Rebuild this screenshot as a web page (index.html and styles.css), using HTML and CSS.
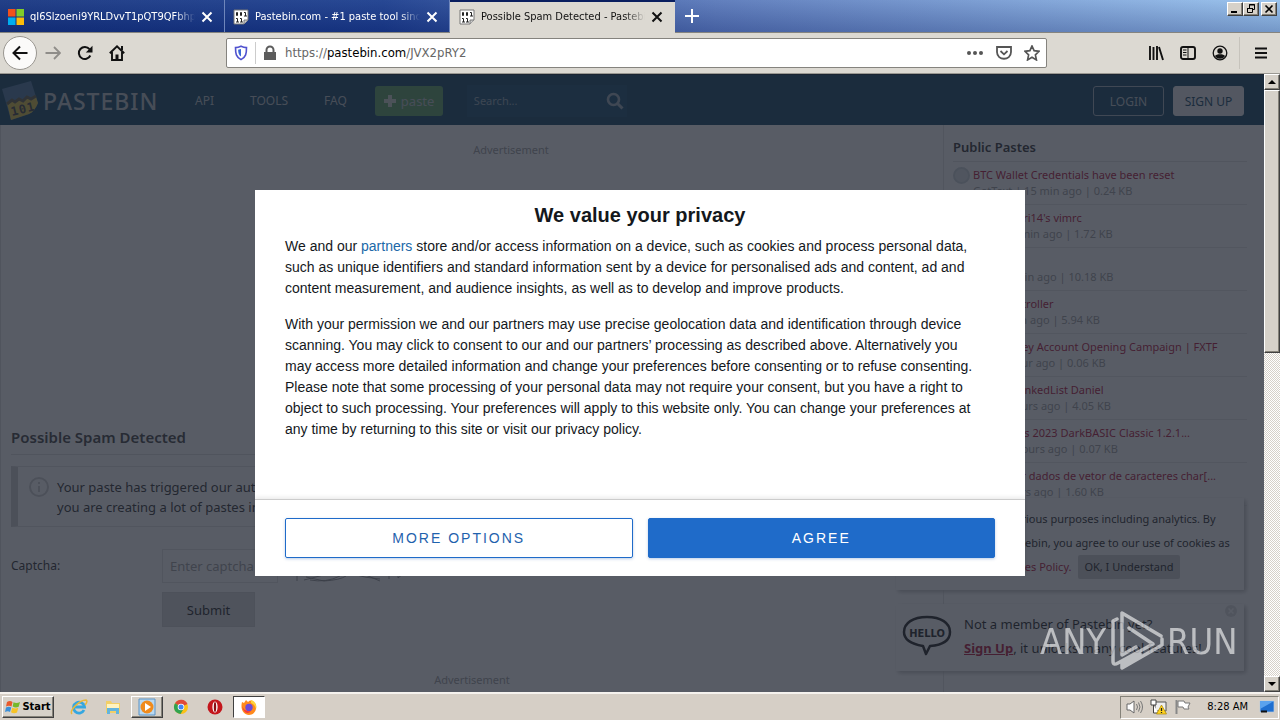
FILE: index.html
```html
<!DOCTYPE html>
<html lang="en">
<head>
<meta charset="utf-8">
<title>Possible Spam Detected - Pastebin.com</title>
<link rel="stylesheet" href="styles.css">
</head>
<body>
<svg class="defs" aria-hidden="true">
  <symbol id="close" viewBox="0 0 12 12"><path d="M1.500 1.500l9 9M10.500 1.500l-9 9" fill="none" stroke="currentColor" stroke-width="2"/></symbol>
  <symbol id="bits" viewBox="0 0 16 16">
    <path d="M1 1h14v10l-4 4H1z" fill="#fff" stroke="#777" stroke-width="1"/>
    <path d="M11 15v-4h4" fill="#ccc" stroke="#777" stroke-width="1"/>
    <path d="M3.500 3.500h1v3h-1zM7.500 3.500h1v3h-1zM11 3.500h1.500V7M11 7h3M3 9.500h1.500V13M3 13h3M7 9.500h1.500V13M7 13h3" fill="none" stroke="#222" stroke-width="1"/>
  </symbol>
</svg>

<header class="tabbar">
  <div class="tab">
    <svg class="fav" viewBox="0 0 16 16"><path fill="#f1511b" d="M0 0h7.500v7.500H0z"/><path fill="#80cc28" d="M8.500 0H16v7.500H8.500z"/><path fill="#00adef" d="M0 8.500h7.500V16H0z"/><path fill="#fbbc09" d="M8.500 8.500H16V16H8.500z"/></svg>
    <span class="tab-title">qI6Slzoeni9YRLDvvT1pQT9QFbhp</span>
    <button class="tab-close" aria-label="Close tab"><svg width="12" height="12"><use href="#close"/></svg></button>
  </div>
  <div class="tab">
    <svg class="fav"><use href="#bits"/></svg>
    <span class="tab-title">Pastebin.com - #1 paste tool since</span>
    <button class="tab-close" aria-label="Close tab"><svg width="12" height="12"><use href="#close"/></svg></button>
  </div>
  <div class="tab active">
    <svg class="fav"><use href="#bits"/></svg>
    <span class="tab-title">Possible Spam Detected - Pastebin</span>
    <button class="tab-close" aria-label="Close tab"><svg width="12" height="12"><use href="#close"/></svg></button>
  </div>
  <button class="new-tab" aria-label="New tab"><svg width="16" height="16" viewBox="0 0 16 16"><path d="M8 1v14M1 8h14" stroke="#fff" stroke-width="2"/></svg></button>
  <div class="window-buttons">
    <button aria-label="Minimize"><svg width="12" height="10" viewBox="0 0 12 10"><path d="M2 8h6" stroke="#000" stroke-width="2"/></svg></button>
    <button aria-label="Restore"><svg width="12" height="10" viewBox="0 0 12 10"><path d="M4.500 4V.5h5v5H8M4 1h6M2.500 4.500h5v4h-5zM2 4.500h6" fill="none" stroke="#000"/></svg></button>
    <button class="gap" aria-label="Close"><svg width="12" height="10" viewBox="0 0 12 10"><path d="M2.500 1.500l7 7M9.500 1.500l-7 7" stroke="#000" stroke-width="1.600"/></svg></button>
  </div>
</header>

<nav class="toolbar">
  <button class="back" aria-label="Back"><svg width="16" height="16" viewBox="0 0 16 16"><path d="M15.500 8H1.500M8 1.500L1.500 8 8 14.500" fill="none" stroke="#111" stroke-width="2"/></svg></button>
  <button class="tool" aria-label="Forward"><svg width="16" height="16" viewBox="0 0 16 16"><path d="M.5 8h14M9 2l6 6-6 6" fill="none" stroke="#8f8d89" stroke-width="1.800"/></svg></button>
  <button class="tool" aria-label="Reload"><svg width="16" height="16" viewBox="0 0 16 16"><path d="M13.300 10.500A6 6 0 1 1 12.500 4.200" fill="none" stroke="#111" stroke-width="2"/><path d="M15.500.8v6.700H8.800z" fill="#111"/></svg></button>
  <button class="tool" aria-label="Home"><svg width="16" height="16" viewBox="0 0 16 16"><path d="M.8 8.300L8 1.300l7.200 7M3 7v8h10V7" fill="none" stroke="#111" stroke-width="1.900"/><path d="M6.500 14V9.500h3V14zM12 1h2v4h-2z" fill="#111"/></svg></button>
  <div class="urlbar">
    <svg class="shield" width="14" height="16" viewBox="0 0 14 16"><path d="M7 1.200c2 1 4 1.400 5.500 1.400 0 6-.5 9.500-5.500 12C2 12.100 1.500 8.600 1.500 2.600 3 2.600 5 2.200 7 1.200z" fill="#fff" stroke="#5152cf" stroke-width="1.600"/><path d="M7 4v7.500c-2-1.500-2.700-3-2.900-6.800z" fill="#3a67d7"/></svg>
    <svg class="lock" width="14" height="16" viewBox="0 0 14 16"><path d="M1 7h12v8H1z" fill="#5c5c5c"/><path d="M3.500 8V5a3.500 3.500 0 0 1 7 0v3" fill="none" stroke="#5c5c5c" stroke-width="2"/></svg>
    <span class="url">https://<b>pastebin.com</b>/JVX2pRY2</span>
    <span class="url-icons">
      <svg width="18" height="16" viewBox="0 0 18 16"><g fill="#555"><circle cx="3" cy="8" r="2"/><circle cx="9" cy="8" r="2"/><circle cx="15" cy="8" r="2"/></g></svg>
      <svg width="16" height="16" viewBox="0 0 16 16"><path d="M1 2h14v5c0 9-14 9-14 0z" fill="none" stroke="#555" stroke-width="1.800"/><path d="M4.500 6L8 9.300 11.500 6" fill="none" stroke="#555" stroke-width="1.800"/></svg>
      <svg width="16" height="16" viewBox="0 0 16 16"><path d="M8 1l2.100 4.700 5 .6-3.700 3.500 1 5.100L8 12.300l-4.400 2.600 1-5.100L.9 6.300l5-.6z" fill="none" stroke="#555" stroke-width="1.700"/></svg>
    </span>
  </div>
  <div class="tools-right">
    <button class="tool" aria-label="Library"><svg width="16" height="16" viewBox="0 0 16 16"><path d="M2 1v14M5.500 2v13M9 1v14M11 2l4 13" stroke="#111" stroke-width="1.900" fill="none"/></svg></button>
    <button class="tool" aria-label="Sidebars"><svg width="16" height="16" viewBox="0 0 16 16"><rect x="1" y="2" width="14" height="12" rx="2" fill="none" stroke="#111" stroke-width="1.900"/><path d="M8 2v12M3 5h3.500M3 7.500h3.500M3 10h3.500" stroke="#111"/></svg></button>
    <button class="tool" aria-label="Account"><svg width="16" height="16" viewBox="0 0 16 16"><circle cx="8" cy="8" r="6.800" fill="none" stroke="#111" stroke-width="1.300"/><circle cx="8" cy="6" r="2.700" fill="#111"/><path d="M3 11c1-2.500 9-2.500 10 0-2 3.500-8 3.500-10 0z" fill="#111"/></svg></button>
    <button class="tool menu" aria-label="Menu"><svg width="14" height="14" viewBox="0 0 14 14"><path d="M1 2.500h12M1 7h12M1 11.500h12" stroke="#111" stroke-width="1.900"/></svg></button>
  </div>
</nav>

<div class="viewport">
  <div class="page">
    <header class="site-header">
      <a class="brand" href="#">
        <svg width="38" height="42" viewBox="0 0 38 42"><path d="M1 9L30 1l7 22c-2 5-5 9-9 11L10 40z" fill="#3f6f9c"/><path d="M6 23l29-6 2 6c-2 5-5 9-9 11L10 40z" fill="#d9bd35"/><path d="M6 24l5-4 3 2 4-3 4 2 4-4 4 2 5-3" fill="none" stroke="#55523a" stroke-width="3"/><text x="11" y="36" transform="rotate(-14 11 36)" font-family="DejaVu Sans Mono" font-weight="700" font-size="12" fill="#333">101</text></svg>
        <span>PASTEBIN</span>
      </a>
      <nav class="links"><a href="#">API</a><a href="#">TOOLS</a><a href="#">FAQ</a></nav>
      <a class="paste" href="#"><svg width="12" height="12" viewBox="0 0 12 12"><path d="M6 0v12M0 6h12" stroke="#ccd6cc" stroke-width="4"/></svg>paste</a>
      <form class="search">
        <input type="text" placeholder="Search..." aria-label="Search">
        <svg width="18" height="18" viewBox="0 0 18 18"><circle cx="7.500" cy="7.500" r="5.500" fill="none" stroke="#98a8b5" stroke-width="2.600"/><path d="M11.500 11.500l5 5" stroke="#98a8b5" stroke-width="3"/></svg>
      </form>
      <div class="auth"><a class="login" href="#">LOGIN</a><a class="signup" href="#">SIGN UP</a></div>
    </header>

    <div class="columns">
      <main>
        <p class="ad ad-top">Advertisement</p>
        <h1>Possible Spam Detected</h1>
        <div class="info">
          <svg width="20" height="20" viewBox="0 0 20 20"><circle cx="10" cy="10" r="9" fill="none" stroke="#ccc" stroke-width="2"/><path d="M10 5v2M10 9v6" stroke="#ccc" stroke-width="2"/></svg>
          <p>Your paste has triggered our automatic SPAM detection filter.<br>you are creating a lot of pastes in a short time.</p>
        </div>
        <form class="captcha">
          <label for="cap">Captcha:</label>
          <input id="cap" type="text" placeholder="Enter captcha">
          <svg width="120" height="34" viewBox="0 0 120 34"><path d="M5 16v16M12 31q22-6 42-10M14 28l18 4q16-1 22-5M18 31q16 3 30-4M60 25q14 4 28 5M64 22l24 10M97 22v8M106 23v6l6-5" fill="none" stroke="#777" stroke-width=".8"/></svg>
          <button class="submit" type="button">Submit</button>
        </form>
        <p class="ad ad-bottom">Advertisement</p>
      </main>
      <aside>
        <h2>Public Pastes</h2>
        <ul>
          <li><a href="#">BTC Wallet Credentials have been reset</a><small>GetText | 15 min ago | 0.24 KB</small></li>
          <li><a href="#">Mohammri14's vimrc</a><small>Vim | 20 min ago | 1.72 KB</small></li>
          <li><a href="#">Untitled</a><small>C# | 34 min ago | 10.18 KB</small></li>
          <li><a href="#">Door Controller</a><small>C | 46 min ago | 5.94 KB</small></li>
          <li><a href="#">New Money Account Opening Campaign | FXTF</a><small>C# | 1 hour ago | 0.06 KB</small></li>
          <li><a href="#">Custom LinkedList Daniel</a><small>C# | 2 hours ago | 4.05 KB</small></li>
          <li><a href="#">Programas 2023 DarkBASIC Classic 1.2.1...</a><small>Java | 2 hours ago | 0.07 KB</small></li>
          <li><a href="#">Manipular dados de vetor de caracteres char[...</a><small>C | 3 hours ago | 1.60 KB</small></li>
        </ul>
      </aside>
    </div>

    <div class="notices">
      <section class="cookie">We use cookies for various purposes including analytics. By<br>continuing to use Pastebin, you agree to our use of cookies as<br>described in the <a href="#">Cookies Policy.</a> <button>OK, I Understand</button></section>
      <section class="hello">
        <svg width="50" height="42" viewBox="0 0 50 42"><path d="M25 2C11 2 2 8 2 17c0 8 7 12 19 14l3 8 4-8c13-1 20-6 20-14C48 8 39 2 25 2z" fill="none" stroke="#111" stroke-width="2.500" stroke-linejoin="round"/><text x="25" y="22" text-anchor="middle" font-family="DejaVu Sans Condensed" font-weight="700" font-size="11" fill="#111">HELLO</text></svg>
        <p>Not a member of Pastebin yet?<br><a href="#">Sign Up</a>, it unlocks many cool features!</p>
        <button class="dismiss" aria-label="Dismiss"><svg width="14" height="14" viewBox="0 0 14 14"><circle cx="7" cy="7" r="6" fill="#ddd"/><path d="M4.500 4.500l5 5M9.500 4.500l-5 5" stroke="#fff" stroke-width="1.500"/></svg></button>
      </section>
    </div>
    <div class="dim"></div>
  </div>

  <div class="scrollbar">
    <button aria-label="Scroll up"><svg width="8" height="4" viewBox="0 0 8 4"><path d="M0 4l4-4 4 4z"/></svg></button>
    <div class="thumb"></div>
    <div class="track"></div>
    <button aria-label="Scroll down"><svg width="8" height="4" viewBox="0 0 8 4"><path d="M0 0l4 4 4-4z"/></svg></button>
  </div>

  <div class="modal-layer">
    <div class="modal" role="dialog" aria-labelledby="privacy">
      <h2 id="privacy">We value your privacy</h2>
      <div class="modal-body">
        <p>We and our <a href="#">partners</a> store and/or access information on a device, such as cookies and process personal data,<br>such as unique identifiers and standard information sent by a device for personalised ads and content, ad and<br>content measurement, and audience insights, as well as to develop and improve products.</p>
        <p>With your permission we and our partners may use precise geolocation data and identification through device<br>scanning. You may click to consent to our and our partners’ processing as described above. Alternatively you<br>may access more detailed information and change your preferences before consenting or to refuse consenting.<br>Please note that some processing of your personal data may not require your consent, but you have a right to<br>object to such processing. Your preferences will apply to this website only. You can change your preferences at<br>any time by returning to this site or visit our privacy policy.</p>
      </div>
      <div class="modal-footer"><button class="more">MORE OPTIONS</button><button class="agree">AGREE</button></div>
    </div>
  </div>

  <svg class="watermark" width="196" height="64" viewBox="0 0 196 64" role="img" aria-label="ANY RUN">
    <g fill="#fff"><text x="2" y="45">ANY</text><text x="129" y="45">RUN</text></g>
    <g fill="none" stroke="#fff" stroke-width="3.500" stroke-linejoin="round" stroke-linecap="round"><path d="M79 10l-4 2V52q0 5 5 2L115 35 91 19M123 27L84 4V46l14-8M84 17V44M124 30v6L84 59v-4l18-10"/></g>
  </svg>
</div>

<footer class="taskbar">
  <button class="start"><svg width="16" height="16" viewBox="0 0 16 16"><path d="M2 3q3-2 5.500 0L6.500 7.500Q4 6 1 7.500z" fill="#e8592b"/><path d="M8.500 3.300Q11.500 5 15 3l-1.300 4.700q-3 1.500-6-.2z" fill="#76b82a"/><path d="M1 8.500q3-1.500 5.300 0L5 13q-2-1.500-5 0z" fill="#3a8fd8"/><path d="M7.300 8.800q3 1.500 6 0L12 13.500q-3 1.500-6-.2z" fill="#f7c325"/></svg>Start</button>
  <button class="app" aria-label="Internet Explorer"><svg width="18" height="18" viewBox="0 0 18 18"><path d="M14 12a5.500 5.500 0 1 1 .5-3H5" fill="none" stroke="#35a7e0" stroke-width="2.800"/><path d="M2 16C-1 13 9 2 16 2c2 1 0 4-1 5" fill="none" stroke="#e9b83a" stroke-width="1.500"/></svg></button>
  <button class="app" aria-label="Explorer"><svg width="18" height="18" viewBox="0 0 18 18"><path d="M2 3h5l1 2h8v10H2z" fill="#f2cf67"/><path d="M3 6h12v4H3z" fill="#fff3bf"/><path d="M3 10h12v6h-3v-3H6v3H3z" fill="#63b4dd"/></svg></button>
  <button class="app raised" aria-label="Media Player"><svg width="18" height="18" viewBox="0 0 18 18"><path d="M1 1h16v16H1z" fill="#b9d9f1" stroke="#5a93c6"/><circle cx="9" cy="9" r="6.500" fill="#f08b1c"/><path d="M7 5l6 4-6 4z" fill="#fff"/></svg></button>
  <button class="app" aria-label="Chrome"><svg width="16" height="16" viewBox="0 0 16 16"><circle cx="8" cy="8" r="7" fill="#fbc116"/><path d="M8 8L2 4.300A7 7 0 0 1 14.500 5z" fill="#df4a3a"/><path d="M8 8l-6-3.700A7 7 0 0 0 7.500 15l3-5z" fill="#31a350"/><circle cx="8" cy="8" r="3.300" fill="#fff"/><circle cx="8" cy="8" r="2.500" fill="#4285f4"/></svg></button>
  <button class="app" aria-label="Opera"><svg width="16" height="16" viewBox="0 0 16 16"><circle cx="8" cy="8" r="7.500" fill="#c4161c"/><ellipse cx="8" cy="8" rx="2.600" ry="5.500" fill="#fff"/><ellipse cx="8" cy="8" rx="1.200" ry="5" fill="#8b0d12"/></svg></button>
  <button class="app pressed" aria-label="Firefox"><svg width="18" height="18" viewBox="0 0 18 18"><path d="M2 4l2 1 2-3 2 2c3-3 6-1 8 3 1 5-2 10-7 10S0 12 2 4z" fill="#ff8a1c"/><path d="M11 2c4 1 6 5 5 9-1-3-2-5-5-6z" fill="#ffd43a"/><circle cx="9" cy="9.500" r="3.700" fill="#6b4bd8"/><path d="M2 7c1 5 5 7 9 6-3 4-8 2-9-6z" fill="#f6363c"/></svg></button>
  <div class="tray">
    <svg width="18" height="16" viewBox="0 0 18 16"><path d="M1 5h3l4-3v12l-4-3H1z" fill="#fff" stroke="#666"/><path d="M10.500 5q2 3 0 6M12.500 3.500q3 4.500 0 9M14.500 2q4 6 0 12" fill="none" stroke="#777"/></svg>
    <svg width="18" height="16" viewBox="0 0 18 16"><path d="M5 3h11v9H5z" fill="#eee" stroke="#555"/><path d="M1 1h5v5H1zM3.500 6v8h5" fill="#fff" stroke="#444"/><path d="M11.500 6l5 9h-10z" fill="#ffd21f" stroke="#a88400" stroke-width=".7"/><path d="M11.500 9v3M11.500 13v1" stroke="#222" stroke-width="1.300"/></svg>
    <svg width="18" height="16" viewBox="0 0 18 16"><path d="M2.500 1v14" stroke="#888" stroke-width="2"/><path d="M4 2h6l1 2h5l-2 4 1 2h-5L9 8H4z" fill="#fff" stroke="#777"/></svg>
    <time>8:28 AM</time>
    <svg width="16" height="14" viewBox="0 0 16 14"><path d="M1 1h14v11H1z" fill="#1f6fd0" stroke="#bcd" stroke-width=".7"/><path d="M1 1h14L1 9z" fill="#5aa2ee"/><path d="M2 11.500h6" stroke="#111" stroke-width="2"/></svg>
  </div>
</footer>
</body>
</html>
```
FILE: styles.css
```css
* { box-sizing: border-box; }
body { margin: 0; height: 100vh; display: flex; flex-direction: column; overflow: hidden; font: 11px/16px "DejaVu Sans Condensed", "Noto Sans", sans-serif; color: #000; }
button { font: inherit; color: inherit; border: 0; padding: 0; background: none; display: flex; align-items: center; justify-content: center; }
input { font: inherit; border: 0; padding: 0; }
a { color: inherit; text-decoration: none; }
p, h1, h2, ul { margin: 0; padding: 0; }
svg { flex: none; display: block; }
.defs { position: absolute; width: 0; height: 0; }

.tabbar { height: 33px; flex: none; display: flex; border-bottom: 1px solid #85847f; background: linear-gradient(to bottom, rgba(255,255,255,.08), rgba(20,30,90,.25)), linear-gradient(to right, #10307e 0, #16398b 30%, #5575b8 56%, #86aee0 90%, #94c0ec 100%); }
.tab { width: 225px; padding: 1px 9px 0 8px; display: flex; align-items: center; gap: 6px; color: #fff; border-right: 1px solid #6f86bb; }
.tab.active { background: #dcd9d2; color: #111; border-top: 2px solid #0a1f60; margin-bottom: -1px; border-right: 0; padding: 0 10px 1px 9px; }
.fav { width: 16px; height: 16px; }
.tab-title { flex: 1; min-width: 0; white-space: nowrap; -webkit-mask-image: linear-gradient(to left, transparent 0, #000 20px); mask-image: linear-gradient(to left, transparent 0, #000 20px); }
.tab-close { width: 12px; height: 16px; margin-right: 2px; }
.new-tab { width: 34px; }
.window-buttons { margin: 2px 3px 0 auto; display: flex; height: 14px; }
.window-buttons button, .scrollbar button, .thumb, .start, .raised { background: #d6d1c9; border: 1px solid; border-color: #fff #404040 #404040 #fff; box-shadow: inset -1px -1px #858279; }
.window-buttons button { width: 16px; }
.window-buttons .gap { margin-left: 2px; }

.toolbar { height: 41px; flex: none; display: flex; align-items: center; background: #dcd9d2; border-bottom: 1px solid #9a9892; padding: 0 2px 0 3px; }
.back { width: 34px; height: 34px; border-radius: 50%; background: #fbfaf9; border: 1px solid #999690; }
.tool { width: 32px; height: 32px; }
.urlbar { flex: 1; margin-left: 93px; height: 30px; background: #fff; border: 1px solid #85837e; border-radius: 2px; display: flex; align-items: center; padding: 0 6px 0 7px; }
.lock { margin: 0 8px 0 7px; }
.shield { box-sizing: content-box; padding-right: 7px; border-right: 1px solid #ccc; height: 22px; }
.url { font-size: 13px; color: #666; }
.url b { font-weight: 400; color: #000; }
.url-icons { margin-left: auto; display: flex; gap: 12px; }
.tools-right { display: flex; margin-left: 93px; }
.menu { margin-left: 3px; padding-left: 4px; border-left: 1px solid #c6c3bc; width: 39px; }

.viewport { flex: 1; min-height: 0; display: flex; position: relative; }
.page { flex: 1; min-width: 0; position: relative; overflow: hidden; background: #fff; font-family: "Noto Sans", sans-serif; display: flex; flex-direction: column; }
.dim { position: absolute; inset: 0; background: rgba(35, 41, 52, .76); }
.site-header { height: 51px; flex: none; background: #023859; color: #b9c0c6; display: flex; align-items: center; padding: 1px 20px 0 1px; border-top: 1px solid #001a2c; font-size: 12px; }
.brand { display: flex; align-items: center; gap: 4px; font: 500 23px/28px "Noto Sans", sans-serif; letter-spacing: 1px; width: 176px; }
.links { display: flex; gap: 36px; margin-left: 18px; }
.paste { margin-left: 28px; width: 68px; height: 30px; border-radius: 3px; background: #4f9a58; display: flex; align-items: center; gap: 5px; padding-left: 9px; font-size: 13px; }
.search { margin-left: 24px; width: 160px; height: 32px; background: #064267; display: flex; align-items: center; padding: 0 3px 0 7px; }
.search input { flex: 1; min-width: 0; background: none; color: #fff; font-size: 11px; }
.search input::placeholder { color: #8ca0b0; }
.auth { margin-left: auto; display: flex; gap: 9px; }
.auth a { width: 71px; height: 30px; border-radius: 3px; border: 1px solid #9aabb8; display: flex; align-items: center; justify-content: center; padding-top: 2px; }
.auth .signup { background: #e8eaec; color: #023859; border-color: #e8eaec; }

.columns { flex: 1; min-height: 0; display: flex; }
main { flex: 1; min-width: 0; padding: 0 10px; border-left: 1px solid #ddd; color: #222; }
.ad { text-align: center; color: #999; font-size: 11px; }
.ad-top { padding: 17px 0 0 78px; height: 300px; }
h1 { font: 600 15px/24px "Noto Sans", sans-serif; color: #333; height: 30px; border-bottom: 1px solid #ddd; }
.info { margin-top: 11px; height: 61px; border: 1px solid #e0e0e0; border-left: 7px solid #ccc; display: flex; gap: 8px; padding: 10px 11px; font-size: 13px; line-height: 20px; white-space: nowrap; overflow: hidden; }
.captcha { margin-top: 22px; display: grid; grid-template-columns: 151px 116px 1fr; row-gap: 9px; column-gap: 0; align-items: center; font-size: 12px; }
.captcha svg { margin-left: 14px; }
.captcha input { height: 34px; border: 1px solid #e0e0e0; padding: 0 7px; font-size: 13px; background: #fff; }
.captcha input::placeholder { color: #999; }
.submit { grid-column: 2; width: 93px; height: 35px; background: #d8d8d8; border: 1px solid #d0d0d0; font-size: 13px; color: #111; }
.ad-bottom { margin-top: 45px; }
aside { width: 321px; border-left: 1px solid #e0e0e0; padding: 9px 17px 0 9px; color: #999; }
aside h2 { font: 600 13px/26px "Noto Sans", sans-serif; height: 28px; color: #222; border-bottom: 1px solid #e0e0e0; }
aside ul { list-style: none; }
aside li { height: 43px; padding: 5px 0 0 20px; border-bottom: 1px solid #e5e5e5; position: relative; line-height: 16px; white-space: nowrap; }
aside li::before { content: ""; position: absolute; left: 0; top: 5px; width: 13px; height: 13px; border-radius: 50%; background: #dde3e6; border: 2px solid #c9d0d5; }
aside li a, .cookie a, .hello a { color: #b0002c; }
aside li a, aside li small { display: block; font-size: 11px; }

.notices { position: absolute; right: 20px; bottom: 21px; width: 348px; display: flex; flex-direction: column; gap: 14px; color: #111; }
.notices section { background: #fff; box-shadow: 2px 2px 4px #bbb; line-height: 24px; white-space: nowrap; }
.cookie { padding: 9px 14px 11px; }
.cookie button { display: inline-block; height: 24px; padding: 0 6px; margin-left: 4px; background: #ccc; border-radius: 2px; }
.hello { display: flex; gap: 12px; align-items: center; height: 67px; padding: 0 6px 4px; font-size: 13px; position: relative; }
.hello a { font-weight: 700; text-decoration: underline; }
.dismiss { position: absolute; right: 6px; top: 0; }

.scrollbar { width: 16px; display: flex; flex-direction: column; background: repeating-conic-gradient(#fff 0 25%, #d6d1c9 0 50%) 0 0 / 2px 2px; }
.scrollbar button { height: 16px; }
.thumb { flex: 262; }
.track { flex: 325; }

.modal-layer { position: absolute; inset: 0; display: flex; align-items: center; justify-content: center; }
.modal { width: 770px; background: #fff; font: 14px/21px "Liberation Sans", Arial, sans-serif; color: #14181c; }
.modal h2 { font-size: 20px; line-height: 26px; text-align: center; padding: 12px 0 8px; }
.modal-body { padding: 0 30px; height: 263px; }
.modal-body p { margin-bottom: 15px; }
.modal-body a { color: #2068a8; }
.modal-footer { display: flex; gap: 15px; padding: 18px 30px; border-top: 1px solid #ccc; box-shadow: 0 -2px 4px rgba(0,0,0,.08); }
.modal-footer button { flex: 1; height: 40px; border: 1px solid #1f6bc9; border-radius: 2px; letter-spacing: 2px; color: #1f62ad; box-shadow: 0 1px 3px rgba(30,90,170,.3); }
.modal-footer .agree { background: #1f6bc9; color: #fff; }
.watermark { position: absolute; right: 46px; bottom: 19px; overflow: visible; opacity: .6; font: 36px "DejaVu Sans Condensed", sans-serif; }

.taskbar { height: 28px; flex: none; border-top: 2px solid #f5f2ee; background: #d6cfc6; display: flex; align-items: center; padding: 0 1px 0 2px; }
.start { width: 52px; height: 22px; font-weight: 700; gap: 1px; margin-right: 9px; }
.app { width: 32px; height: 22px; margin-right: 2px; }
.pressed { background: #fff; border: 1px solid; border-color: #404040 #fff #fff #404040; }
.tray { margin-left: auto; height: 23px; border: 1px solid; border-color: #858279 #fff #fff #858279; display: flex; align-items: center; gap: 6px; padding: 0 3px 0 5px; }
.tray time { margin: 0 5px 0 9px; }
```
